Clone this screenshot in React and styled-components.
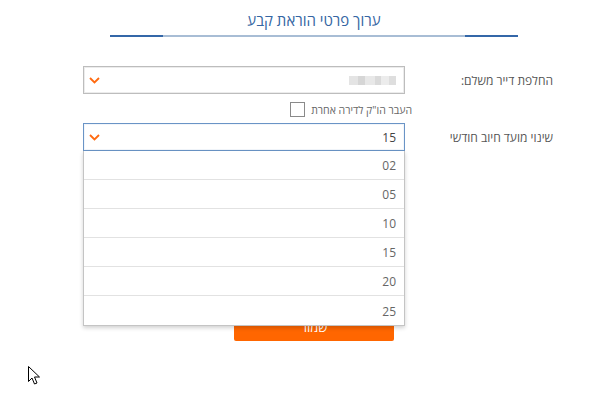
import styled, { createGlobalStyle } from "styled-components";

const GlobalStyle = createGlobalStyle`
  html, body {
    margin: 0;
    padding: 0;
    background: #fff;
    font-family: "Open Sans", "Noto Sans", "DejaVu Sans", sans-serif;
  }
`;

const Page = styled.div`
  position: relative;
  width: 597px;
  height: 401px;
  overflow: hidden;
  display: flex;
  flex-direction: column;
`;

const TitleBlock = styled.div`
  width: 408px;
  margin-left: 110px;
  padding-top: 10px;
  display: flex;
  flex-direction: column;
  align-items: center;
`;

const Title = styled.h2`
  margin: 0;
  font-size: 15px;
  font-weight: 400;
  line-height: 20px;
  color: #3566a3;
  direction: rtl;
`;

const Rule = styled.div`
  width: 100%;
  height: 2px;
  margin-top: 5px;
  background: #a8bdd5;
  display: flex;
  justify-content: space-between;

  span {
    width: 53px;
    background: #3467a8;
  }
`;

const Form = styled.div`
  width: 482px;
  margin-left: 83px;
  margin-top: 29px;
  direction: rtl;
  display: flex;
  flex-direction: column;
`;

const Row = styled.div`
  display: flex;
  align-items: center;
  margin-top: ${(p) => p.$gap || 0}px;
`;

const Label = styled.label`
  width: 160px;
  padding-right: 12px;
  box-sizing: border-box;
  font-size: 12px;
  color: #555;
`;

const Field = styled.div`
  position: relative;
  width: 322px;
`;

const Select = styled.div`
  height: 28px;
  box-sizing: border-box;
  border: 1px solid ${(p) => (p.$focus ? "#6a94c6" : "#bdbdbd")};
  box-shadow: inset 0 0 0 1px ${(p) => (p.$focus ? "#f2f6fb" : "#ececec")};
  display: flex;
  align-items: center;
  justify-content: space-between;
  padding: 0 8px 0 5px;
  font-size: 12px;
  color: #444;
  background: #fff;
`;

const Blurred = styled.div`
  width: 47px;
  height: 9px;
  background: linear-gradient(
    90deg,
    #e4e4e4 0 20%,
    #d6d6d6 20% 35%,
    #e8e8e8 35% 55%,
    #dadada 55% 68%,
    #ececec 68% 85%,
    #dedede 85% 100%
  );
  filter: blur(0.6px);
`;

const Chevron = () => (
  <svg width="11" height="7" viewBox="0 0 11 7">
    <polyline
      points="1,1 5.5,5.5 10,1"
      fill="none"
      stroke="#ff6a10"
      strokeWidth="1.8"
    />
  </svg>
);

const CheckRow = styled.div`
  display: flex;
  align-items: center;
  gap: 6px;
  margin-top: 8px;
  margin-right: 153px;
  font-size: 10.5px;
  color: #666;
`;

const Box = styled.span`
  width: 13px;
  height: 13px;
  border: 1px solid #8a8a8a;
  background: #fff;
`;

const Menu = styled.ul`
  position: absolute;
  top: 28px;
  left: 0;
  right: 0;
  margin: 0;
  padding: 0;
  list-style: none;
  background: #fff;
  border: 1px solid #c4c4c4;
  border-top: none;
  box-shadow: 0 2px 4px rgba(0, 0, 0, 0.18);
  z-index: 2;
`;

const Option = styled.li`
  height: 29px;
  box-sizing: border-box;
  border-bottom: 1px solid #e2e2e2;
  display: flex;
  align-items: center;
  padding: 1px 8px 0 0;
  font-size: 12px;
  color: #666;

  &:last-child {
    border-bottom: none;
  }
`;

const ButtonRow = styled.div`
  width: 408px;
  margin-left: 110px;
  margin-top: 162px;
  display: flex;
  justify-content: center;
`;

const SaveButton = styled.button`
  width: 160px;
  height: 28px;
  border: none;
  border-radius: 2px;
  background: #ff6600;
  color: #fff;
  font-family: inherit;
  font-size: 13px;
  direction: rtl;
`;

const Cursor = styled.svg`
  position: absolute;
  left: 28px;
  top: 366px;
`;

const days = ["02", "05", "10", "15", "20", "25"];

export default function App() {
  return (
    <Page>
      <GlobalStyle />
      <TitleBlock>
        <Title>ערוך פרטי הוראת קבע</Title>
        <Rule>
          <span />
          <span />
        </Rule>
      </TitleBlock>

      <Form>
        <Row>
          <Label>החלפת דייר משלם:</Label>
          <Field>
            <Select>
              <Blurred />
              <Chevron />
            </Select>
          </Field>
        </Row>
        <CheckRow>
          <span>העבר הו"ק לדירה אחרת</span>
          <Box />
        </CheckRow>
        <Row $gap={6}>
          <Label>שינוי מועד חיוב חודשי</Label>
          <Field>
            <Select $focus>
              <span>15</span>
              <Chevron />
            </Select>
            <Menu>
              {days.map((d) => (
                <Option key={d}>{d}</Option>
              ))}
            </Menu>
          </Field>
        </Row>
      </Form>

      <ButtonRow>
        <SaveButton>שמור</SaveButton>
      </ButtonRow>

      <Cursor width="13" height="20" viewBox="0 0 13 20">
        <path
          d="M0.5 0.5 L0.5 15.5 L4 12 L6.5 18 L9 17 L6.5 11 L11.5 11 Z"
          fill="#fff"
          stroke="#000"
          strokeWidth="1"
          strokeLinejoin="round"
        />
      </Cursor>
    </Page>
  );
}
